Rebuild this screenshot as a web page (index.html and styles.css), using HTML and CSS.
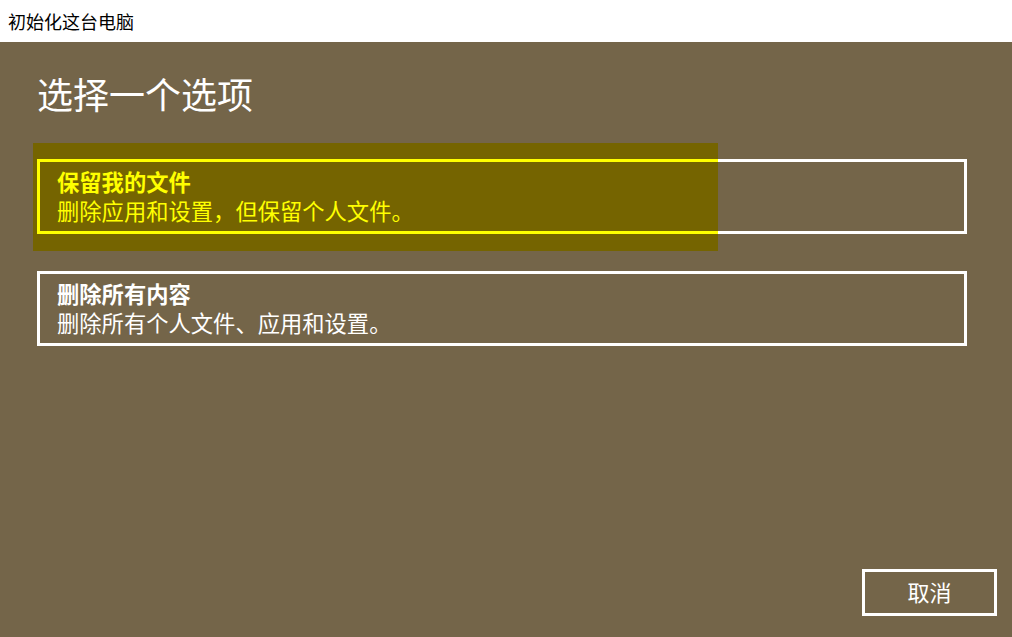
FILE: index.html
```html
<!DOCTYPE html>
<html lang="zh-CN">
<head>
<meta charset="utf-8">
<title>初始化这台电脑</title>
<link rel="stylesheet" href="styles.css">
</head>
<body>
<div class="window">
  <header class="titlebar">初始化这台电脑</header>
  <main class="content">
    <h1 class="heading">选择一个选项</h1>
    <div class="options">
      <div class="focus-ring"></div>
      <button class="option focused">
        <span class="option-title">保留我的文件</span>
        <span class="option-desc">删除应用和设置，但保留个人文件。</span>
      </button>
      <button class="option">
        <span class="option-title">删除所有内容</span>
        <span class="option-desc">删除所有个人文件、应用和设置。</span>
      </button>
    </div>
    <div class="footer">
      <button class="cancel">取消</button>
    </div>
  </main>
</div>
</body>
</html>
```
FILE: styles.css
```css
* { box-sizing: border-box; }
html, body { margin: 0; padding: 0; }
body {
  width: 1012px;
  height: 637px;
  overflow: hidden;
  font-family: "Noto Sans CJK SC", "Noto Sans", sans-serif;
}
.window {
  display: flex;
  flex-direction: column;
  height: 637px;
}
.titlebar {
  height: 42px;
  line-height: 42px;
  background: #ffffff;
  color: #000000;
  font-size: 18px;
  padding-left: 8px;
}
.content {
  flex: 1;
  background: #746549;
  display: flex;
  flex-direction: column;
  padding: 27px 15px 21px 37px;
}
.heading {
  margin: 0;
  font-size: 36px;
  line-height: 48px;
  font-weight: 400;
  color: #ffffff;
}
.options {
  position: relative;
  margin-top: 42px;
  margin-right: 30px;
  display: flex;
  flex-direction: column;
  gap: 37px;
}
.focus-ring {
  position: absolute;
  left: -4px;
  top: -16px;
  width: 685px;
  height: 108px;
  background: #756400;
}
.option {
  position: relative;
  z-index: 1;
  display: flex;
  flex-direction: column;
  align-items: flex-start;
  height: 75px;
  padding: 5px 17px 0;
  background: transparent;
  border: 3px solid #ffffff;
  color: #ffffff;
  font-family: inherit;
  font-size: 22.3px;
  line-height: 29px;
  text-align: left;
  cursor: pointer;
}
.option.focused {
  color: #ffff00;
  border-image: linear-gradient(to right, #ffff00 0, #ffff00 681px, #ffffff 681px, #ffffff 100%) 3;
}
.option-title { font-weight: 700; }
.option-desc { font-weight: 400; }
.footer {
  margin-top: auto;
  display: flex;
  justify-content: flex-end;
}
.cancel {
  width: 135px;
  height: 47px;
  background: transparent;
  border: 3px solid #ffffff;
  color: #ffffff;
  font-family: inherit;
  font-size: 22px;
  line-height: 1;
  padding: 0 0 3px;
  cursor: pointer;
}
```
